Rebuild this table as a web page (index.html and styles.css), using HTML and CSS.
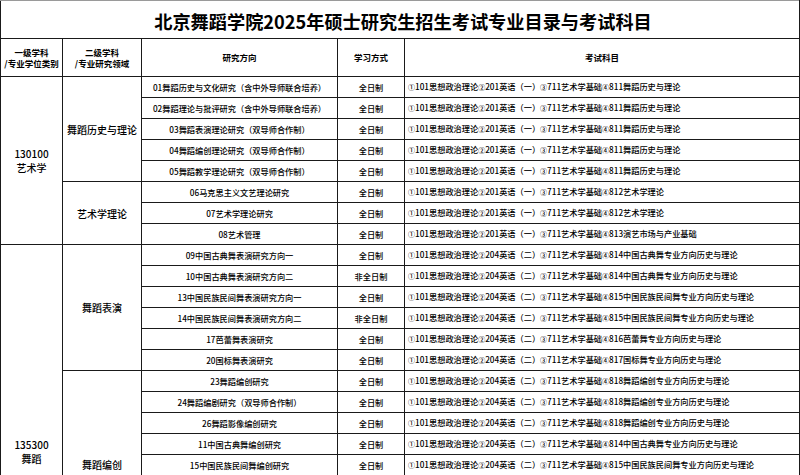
FILE: index.html
```html
<!DOCTYPE html>
<html lang="zh-CN">
<head>
<meta charset="utf-8">
<title>北京舞蹈学院2025年硕士研究生招生考试专业目录与考试科目</title>
<link rel="stylesheet" href="styles.css">
</head>
<body>
<table class="catalog">
  <colgroup>
    <col class="c1"><col class="c2"><col class="c3"><col class="c4"><col class="c5">
  </colgroup>
  <tr class="title-row"><th colspan="5" class="title">北京舞蹈学院2025年硕士研究生招生考试专业目录与考试科目</th></tr>
  <tr class="head-row">
    <th>一级学科<br>/专业学位类别</th>
    <th>二级学科<br>/专业研究领域</th>
    <th>研究方向</th>
    <th>学习方式</th>
    <th>考试科目</th>
  </tr>
  <tr class="row">
    <td rowspan="8" class="major"><div>130100</div><div>艺术学</div></td>
    <td rowspan="5" class="field">舞蹈历史与理论</td>
    <td>01舞蹈历史与文化研究（含中外导师联合培养）</td>
    <td>全日制</td>
    <td class="exam"><span class="n">①</span>101思想政治理论<span class="n">②</span>201英语（一）<span class="n">③</span>711艺术学基础<span class="n">④</span>811舞蹈历史与理论</td>
  </tr>
  <tr class="row">
    <td>02舞蹈理论与批评研究（含中外导师联合培养）</td>
    <td>全日制</td>
    <td class="exam"><span class="n">①</span>101思想政治理论<span class="n">②</span>201英语（一）<span class="n">③</span>711艺术学基础<span class="n">④</span>811舞蹈历史与理论</td>
  </tr>
  <tr class="row">
    <td>03舞蹈表演理论研究（双导师合作制）</td>
    <td>全日制</td>
    <td class="exam"><span class="n">①</span>101思想政治理论<span class="n">②</span>201英语（一）<span class="n">③</span>711艺术学基础<span class="n">④</span>811舞蹈历史与理论</td>
  </tr>
  <tr class="row">
    <td>04舞蹈编创理论研究（双导师合作制）</td>
    <td>全日制</td>
    <td class="exam"><span class="n">①</span>101思想政治理论<span class="n">②</span>201英语（一）<span class="n">③</span>711艺术学基础<span class="n">④</span>811舞蹈历史与理论</td>
  </tr>
  <tr class="row">
    <td>05舞蹈教学理论研究（双导师合作制）</td>
    <td>全日制</td>
    <td class="exam"><span class="n">①</span>101思想政治理论<span class="n">②</span>201英语（一）<span class="n">③</span>711艺术学基础<span class="n">④</span>811舞蹈历史与理论</td>
  </tr>
  <tr class="row">
    <td rowspan="3" class="field">艺术学理论</td>
    <td>06马克思主义文艺理论研究</td>
    <td>全日制</td>
    <td class="exam"><span class="n">①</span>101思想政治理论<span class="n">②</span>201英语（一）<span class="n">③</span>711艺术学基础<span class="n">④</span>812艺术学理论</td>
  </tr>
  <tr class="row">
    <td>07艺术学理论研究</td>
    <td>全日制</td>
    <td class="exam"><span class="n">①</span>101思想政治理论<span class="n">②</span>201英语（一）<span class="n">③</span>711艺术学基础<span class="n">④</span>812艺术学理论</td>
  </tr>
  <tr class="row">
    <td>08艺术管理</td>
    <td>全日制</td>
    <td class="exam"><span class="n">①</span>101思想政治理论<span class="n">②</span>201英语（一）<span class="n">③</span>711艺术学基础<span class="n">④</span>813演艺市场与产业基础</td>
  </tr>
  <tr class="row">
    <td rowspan="11" class="major major-low"><div>135300</div><div>舞蹈</div></td>
    <td rowspan="6" class="field">舞蹈表演</td>
    <td>09中国古典舞表演研究方向一</td>
    <td>全日制</td>
    <td class="exam"><span class="n">①</span>101思想政治理论<span class="n">②</span>204英语（二）<span class="n">③</span>711艺术学基础<span class="n">④</span>814中国古典舞专业方向历史与理论</td>
  </tr>
  <tr class="row">
    <td>10中国古典舞表演研究方向二</td>
    <td>非全日制</td>
    <td class="exam"><span class="n">①</span>101思想政治理论<span class="n">②</span>204英语（二）<span class="n">③</span>711艺术学基础<span class="n">④</span>814中国古典舞专业方向历史与理论</td>
  </tr>
  <tr class="row">
    <td>13中国民族民间舞表演研究方向一</td>
    <td>全日制</td>
    <td class="exam"><span class="n">①</span>101思想政治理论<span class="n">②</span>204英语（二）<span class="n">③</span>711艺术学基础<span class="n">④</span>815中国民族民间舞专业方向历史与理论</td>
  </tr>
  <tr class="row">
    <td>14中国民族民间舞表演研究方向二</td>
    <td>非全日制</td>
    <td class="exam"><span class="n">①</span>101思想政治理论<span class="n">②</span>204英语（二）<span class="n">③</span>711艺术学基础<span class="n">④</span>815中国民族民间舞专业方向历史与理论</td>
  </tr>
  <tr class="row">
    <td>17芭蕾舞表演研究</td>
    <td>全日制</td>
    <td class="exam"><span class="n">①</span>101思想政治理论<span class="n">②</span>204英语（二）<span class="n">③</span>711艺术学基础<span class="n">④</span>816芭蕾舞专业方向历史与理论</td>
  </tr>
  <tr class="row">
    <td>20国标舞表演研究</td>
    <td>全日制</td>
    <td class="exam"><span class="n">①</span>101思想政治理论<span class="n">②</span>204英语（二）<span class="n">③</span>711艺术学基础<span class="n">④</span>817国标舞专业方向历史与理论</td>
  </tr>
  <tr class="row">
    <td rowspan="5" class="field field-low">舞蹈编创</td>
    <td>23舞蹈编创研究</td>
    <td>全日制</td>
    <td class="exam"><span class="n">①</span>101思想政治理论<span class="n">②</span>204英语（二）<span class="n">③</span>711艺术学基础<span class="n">④</span>818舞蹈编创专业方向历史与理论</td>
  </tr>
  <tr class="row">
    <td>24舞蹈编剧研究（双导师合作制）</td>
    <td>全日制</td>
    <td class="exam"><span class="n">①</span>101思想政治理论<span class="n">②</span>204英语（二）<span class="n">③</span>711艺术学基础<span class="n">④</span>818舞蹈编创专业方向历史与理论</td>
  </tr>
  <tr class="row">
    <td>26舞蹈影像编创研究</td>
    <td>全日制</td>
    <td class="exam"><span class="n">①</span>101思想政治理论<span class="n">②</span>204英语（二）<span class="n">③</span>711艺术学基础<span class="n">④</span>818舞蹈编创专业方向历史与理论</td>
  </tr>
  <tr class="row">
    <td>11中国古典舞编创研究</td>
    <td>全日制</td>
    <td class="exam"><span class="n">①</span>101思想政治理论<span class="n">②</span>204英语（二）<span class="n">③</span>711艺术学基础<span class="n">④</span>814中国古典舞专业方向历史与理论</td>
  </tr>
  <tr class="row">
    <td>15中国民族民间舞编创研究</td>
    <td>全日制</td>
    <td class="exam"><span class="n">①</span>101思想政治理论<span class="n">②</span>204英语（二）<span class="n">③</span>711艺术学基础<span class="n">④</span>815中国民族民间舞专业方向历史与理论</td>
  </tr>
</table>
</body>
</html>
```
FILE: styles.css
```css
html, body {
  margin: 0;
  padding: 0;
  background: #fff;
  overflow: hidden;
}

body {
  font-family: "Noto Sans CJK SC", sans-serif;
  color: #000;
}

.catalog {
  border-collapse: collapse;
  table-layout: fixed;
  width: 799px;
}

.c1 { width: 62px; }
.c2 { width: 79px; }
.c3 { width: 196px; }
.c4 { width: 67px; }
.c5 { width: 395px; }

.catalog th,
.catalog td {
  border: 1px solid #1a1a1a;
  padding: 0;
  text-align: center;
  vertical-align: middle;
  font-size: 8.2px;
  font-weight: 500;
  line-height: 11px;
  white-space: nowrap;
  overflow: hidden;
}

.catalog th {
  font-weight: bold;
  font-size: 8.5px;
}

.title-row { height: 38px; }

.catalog .title {
  font-size: 18.2px;
  line-height: 22px;
  padding-top: 3px;
  padding-left: 6px;
  border-top-color: #9a9a9a;
}

.head-row { height: 38px; }

.row { height: 21px; }

.catalog .major {
  font-size: 10px;
  line-height: 12px;
}

.major div + div {
  margin-top: 2px;
}

.catalog .major-low {
  vertical-align: top;
  padding-top: 194px;
}

.catalog .field {
  font-size: 10px;
  line-height: 13px;
}

.catalog .field-low {
  vertical-align: top;
  padding-top: 87px;
}

.catalog .exam {
  text-align: left;
  padding-left: 3px;
}

.n {
  font-size: 7px;
}
```
